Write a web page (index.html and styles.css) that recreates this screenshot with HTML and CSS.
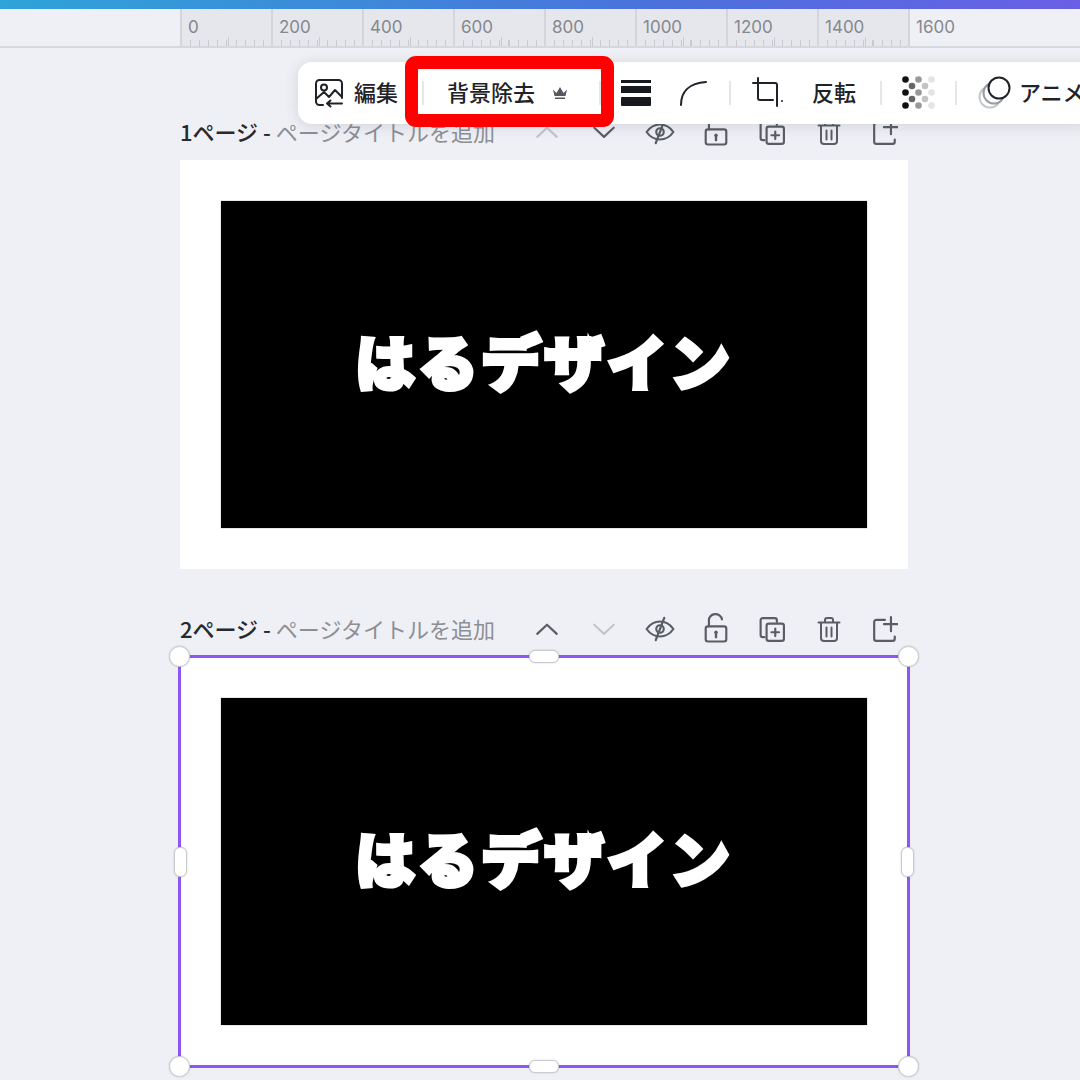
FILE: index.html
```html
<!DOCTYPE html>
<html lang="ja">
<head>
    <meta charset="utf-8">
    <title>はるデザイン</title>
    <link rel="stylesheet" href="styles.css">
</head>
<body>

<svg class="defs" width="0" height="0">
    <symbol id="i-up" viewBox="0 0 24 24"><path d="M3 16.500 12 8l9 8.500"/></symbol>
    <symbol id="i-down" viewBox="0 0 24 24"><path d="M3 8l9 8.500L21 8"/></symbol>
    <symbol id="i-eye" viewBox="0 0 28 24"><path d="M1.500 12C5 7 9 5 14 5s9 2 12.500 7C23 17 19 19 14 19S5 17 1.500 12z"/><circle cx="14" cy="12" r="3.500"/><path d="M18 1.500 10 22.500"/></symbol>
    <symbol id="i-lock" viewBox="0 0 24 28"><rect x="2.500" y="12" width="19" height="14" rx="2"/><path d="M5.500 12V7a6 5.500 0 0 1 12 -1.500"/><path d="M12 18v4" stroke-width="2.200"/><circle class="solid" cx="12" cy="17.500" r="1.600"/></symbol>
    <symbol id="i-copy" viewBox="0 0 24 24"><path d="M5 19.500H3.500A2 2 0 0 1 1.500 17.500V4A2 2 0 0 1 3.500 2h11A2 2 0 0 1 16.500 4v1.500"/><rect x="7" y="7" width="16" height="16" rx="2"/><path d="M15 11.500v7M11.500 15h7"/></symbol>
    <symbol id="i-trash" viewBox="0 0 24 26"><path d="M1.500 6.500h21M8 6V4a2 2 0 0 1 2 -2h4a2 2 0 0 1 2 2v2"/><path d="M4 7v15a3 3 0 0 0 3 3h10a3 3 0 0 0 3 -3V7"/><path d="M9.500 11.500v9M14.500 11.500v9"/></symbol>
    <symbol id="i-add" viewBox="0 0 24 24"><path d="M12 3.500H4A2 2 0 0 0 2 5.500V21a2 2 0 0 0 2 2h15a2 2 0 0 0 2 -2v-2"/><path d="M17.500 1v13M11 7.500h13"/></symbol>
</svg>

<div class="topbar"></div>

<div class="ruler">
    <div class="ruler-seg"><span>0</span></div>
    <div class="ruler-seg"><span>200</span></div>
    <div class="ruler-seg"><span>400</span></div>
    <div class="ruler-seg"><span>600</span></div>
    <div class="ruler-seg"><span>800</span></div>
    <div class="ruler-seg"><span>1000</span></div>
    <div class="ruler-seg"><span>1200</span></div>
    <div class="ruler-seg"><span>1400</span></div>
    <div class="ruler-end">1600</div>
</div>

<div class="toolbar">
    <div class="tool tool-edit">
        <svg class="tool-icon" width="30" height="30" viewBox="0 0 30 30">
            <path d="M13 2H5.500A3.500 3.500 0 0 0 2 5.500v18A3.500 3.500 0 0 0 5.500 27H9"/>
            <path d="M13 2h11.500A3.500 3.500 0 0 1 28 5.500V20"/>
            <circle cx="10" cy="9.500" r="3"/>
            <path d="M2 21 10 14l5 5 6-7 7 7"/>
            <path d="M13 25.500h15M16.500 22.500l-3.500 3 3.500 3"/>
        </svg>
        <span>編集</span>
    </div>
    <div class="divider div-a"></div>
    <div class="tool tool-bg">
        <span>背景除去</span>
        <svg width="16" height="14" viewBox="0 0 16 14"><path class="crown" d="M1 3.500 4.500 7 8 1l3.500 6L15 3.500 13.500 10h-11zM3 11.500h10V13H3z"/></svg>
    </div>
    <div class="divider div-b"></div>
    <svg class="tool-lines" width="30" height="26" viewBox="0 0 30 26">
        <rect y="0" width="30" height="3"/>
        <rect y="6" width="30" height="7"/>
        <rect y="17" width="30" height="9" rx="1"/>
    </svg>
    <svg class="tool-curve" width="28" height="26" viewBox="0 0 28 26"><path d="M2 25C2 12 10 3 27 2"/></svg>
    <div class="divider div-c"></div>
    <svg class="tool-crop" width="32" height="32" viewBox="0 0 32 32">
        <path d="M1 6h22a2 2 0 0 1 2 2v21"/>
        <path d="M6 1v20a2 2 0 0 0 2 2h13"/>
        <circle class="solid" cx="30" cy="24" r="1"/>
    </svg>
    <div class="tool tool-flip"><span>反転</span></div>
    <div class="divider div-d"></div>
    <svg class="tool-check" width="34" height="34" viewBox="0 0 34 34">
        <g fill="#111"><circle cx="3.500" cy="3.500" r="3.300"/><circle cx="3.500" cy="16.500" r="3.300"/><circle cx="3.500" cy="29.500" r="3.300"/></g>
        <g fill="#666"><circle cx="10" cy="10" r="3.300"/><circle cx="10" cy="23" r="3.300"/></g>
        <g fill="#999"><circle cx="16.500" cy="3.500" r="3.300"/><circle cx="16.500" cy="16.500" r="3.300"/><circle cx="16.500" cy="29.500" r="3.300"/></g>
        <g fill="#c4c4c4"><circle cx="23" cy="10" r="3.300"/><circle cx="23" cy="23" r="3.300"/></g>
        <g fill="#e4e4e4"><circle cx="29.500" cy="3.500" r="3.300"/><circle cx="29.500" cy="16.500" r="3.300"/><circle cx="29.500" cy="29.500" r="3.300"/></g>
    </svg>
    <div class="divider div-e"></div>
    <svg class="tool-anim" width="34" height="34" viewBox="0 0 34 34">
        <circle class="ring3" cx="12" cy="21" r="10.500"/>
        <circle class="ring2" cx="16" cy="17" r="10.500"/>
        <circle class="ring1" cx="21" cy="12" r="10.500"/>
    </svg>
    <div class="tool tool-anim-label"><span>アニメート</span></div>
    <div class="highlight"></div>
</div>

<main class="pages">
    <section class="page">
        <div class="page-head">
            <div class="page-title"><b>1ページ -</b> ページタイトルを追加</div>
            <div class="page-actions">
                <svg class="act off"><use href="#i-up"/></svg>
                <svg class="act"><use href="#i-down"/></svg>
                <svg class="act act-eye"><use href="#i-eye"/></svg>
                <svg class="act act-lock"><use href="#i-lock"/></svg>
                <svg class="act"><use href="#i-copy"/></svg>
                <svg class="act"><use href="#i-trash"/></svg>
                <svg class="act"><use href="#i-add"/></svg>
            </div>
        </div>
        <div class="card">
            <div class="artwork">はるデザイン</div>
        </div>
    </section>

    <section class="page">
        <div class="page-head">
            <div class="page-title"><b>2ページ -</b> ページタイトルを追加</div>
            <div class="page-actions">
                <svg class="act"><use href="#i-up"/></svg>
                <svg class="act off"><use href="#i-down"/></svg>
                <svg class="act act-eye"><use href="#i-eye"/></svg>
                <svg class="act act-lock"><use href="#i-lock"/></svg>
                <svg class="act"><use href="#i-copy"/></svg>
                <svg class="act"><use href="#i-trash"/></svg>
                <svg class="act"><use href="#i-add"/></svg>
            </div>
        </div>
        <div class="card selected">
            <div class="artwork">はるデザイン</div>
            <i class="handle corner tl"></i>
            <i class="handle corner tr"></i>
            <i class="handle corner bl"></i>
            <i class="handle corner br"></i>
            <i class="handle pill-h top"></i>
            <i class="handle pill-h bottom"></i>
            <i class="handle pill-v left"></i>
            <i class="handle pill-v right"></i>
        </div>
    </section>
</main>

</body>
</html>
```

FILE: styles.css
```css
* {
    box-sizing: border-box;
}

html, body {
    margin: 0;
    height: 1080px;
    overflow: hidden;
}

body {
    position: relative;
    background-color: #eff0f5;
    font-family: "Noto Sans CJK JP", "Noto Sans", sans-serif;
    color: #1f2328;
}

.defs {
    position: absolute;
}

.topbar {
    height: 9px;
    background: linear-gradient(90deg, #2fa4d8 0%, #4a72db 60%, #6a5fe6 100%);
}

.ruler {
    display: flex;
    height: 39px;
    padding-left: 180px;
    border-bottom: 2px solid #d6d8de;
    font-family: "Inter", "Open Sans", sans-serif;
    font-size: 17px;
    line-height: 22px;
    color: #85888e;
}

.ruler-seg {
    width: 91px;
    padding: 7px 0 0 6px;
    background-color: #e6e7ec;
    border-left: 2px solid #d3d5da;
    background-image:
        repeating-linear-gradient(90deg, #c9cbd1 0 1px, transparent 1px 9.100px);
    background-size: 82px 6px;
    background-position: 8px 100%;
    background-repeat: no-repeat;
    position: relative;
}

.ruler-seg::after {
    content: "";
    position: absolute;
    left: 46px;
    bottom: 0;
    width: 1px;
    height: 9px;
    background-color: #c9cbd1;
}

.ruler-end {
    padding: 7px 0 0 6px;
    border-left: 2px solid #d3d5da;
}

.toolbar {
    position: absolute;
    left: 298px;
    top: 62px;
    width: 800px;
    height: 62px;
    display: flex;
    align-items: center;
    background-color: #fff;
    border-radius: 14px;
    box-shadow: 0 2px 14px rgba(60, 66, 87, 0.16);
    font-size: 22px;
    font-weight: 500;
}

.toolbar svg {
    flex: none;
    fill: none;
    stroke: #1f2328;
    stroke-width: 2;
    stroke-linecap: round;
    stroke-linejoin: round;
}

.tool {
    display: flex;
    align-items: center;
    white-space: nowrap;
}

.tool span {
    margin-bottom: 4px;
}

.tool-edit {
    margin-left: 16px;
}

.tool-edit span {
    margin-left: 10px;
}

.tool-bg {
    margin-left: 23px;
}

.tool-bg svg {
    margin-left: 17px;
}

.toolbar .crown {
    fill: #55585e;
    stroke: none;
}

.divider {
    flex: none;
    width: 2px;
    height: 24px;
    background-color: #e4e6ea;
}

.div-a {
    margin-left: 24px;
}

.div-b {
    margin-left: 31px;
}

.toolbar .tool-lines {
    margin-left: 20px;
    stroke: none;
    fill: #16191d;
}

.tool-curve {
    margin-left: 28px;
}

.div-c {
    margin-left: 22px;
}

.tool-crop {
    margin-left: 21px;
}

.toolbar .solid {
    fill: #1f2328;
    stroke: none;
}

.tool-flip {
    margin-left: 28px;
}

.div-d {
    margin-left: 24px;
}

.toolbar .tool-check {
    margin-left: 20px;
    stroke: none;
}

.div-e {
    margin-left: 19px;
}

.tool-anim {
    margin-left: 21px;
}

.toolbar .ring1 {
    fill: #fff;
}

.toolbar .ring2 {
    fill: #fff;
    stroke: #9a9da2;
}

.toolbar .ring3 {
    stroke: #c6c8cc;
}

.tool-anim-label {
    margin-left: 7px;
}

.highlight {
    position: absolute;
    left: 107px;
    top: -6px;
    width: 209px;
    height: 71px;
    border: 13px solid #ff0000;
    border-radius: 11px;
}

.pages {
    padding-left: 180px;
    width: 908px;
}

.page {
    margin-bottom: 46px;
}

.page-head {
    display: flex;
    align-items: center;
    justify-content: space-between;
    width: 718px;
    height: 28px;
    margin: 70px 0 14px;
}

.page + .page .page-head {
    margin-top: 0;
}

.page-title {
    font-size: 22px;
    color: #8c8f94;
    white-space: nowrap;
    margin-bottom: 2px;
}

.page-title b {
    font-weight: 500;
    color: #26292e;
}

.page-actions {
    display: flex;
    align-items: center;
    justify-content: flex-end;
}

.act {
    width: 26px;
    height: 26px;
    margin-left: 30.300px;
    fill: none;
    stroke: #5a5d63;
    stroke-width: 2;
    stroke-linecap: round;
    stroke-linejoin: round;
}

.act.off {
    stroke: #c3c5cb;
}

.act-eye {
    width: 30px;
    margin: 0 -2px 0 28.300px;
}

.act-lock {
    height: 31px;
    margin-top: -2px;
}

.solid {
    fill: #5a5d63;
    stroke: none;
}

.card {
    position: relative;
    width: 728px;
    height: 409px;
    padding: 41px;
    background-color: #fff;
}

.artwork {
    display: flex;
    align-items: center;
    justify-content: center;
    height: 100%;
    padding-bottom: 10px;
    background-color: #000;
    box-shadow: 0 0 1px #777;
    color: #fff;
    font-size: 60px;
    font-weight: 900;
    letter-spacing: 3px;
    -webkit-text-stroke: 4px #fff;
    line-height: 1;
}

.selected {
    outline: 3px solid #8d56f7;
    outline-offset: -1px;
}

.handle {
    position: absolute;
    background-color: #fff;
    border: 1px solid #c9cbd0;
    box-shadow: 0 0 2px rgba(0, 0, 0, 0.2);
}

.corner {
    width: 21px;
    height: 21px;
    border-radius: 50%;
}

.tl { left: -11px; top: -11px; }
.tr { right: -11px; top: -11px; }
.bl { left: -11px; bottom: -11px; }
.br { right: -11px; bottom: -11px; }

.pill-h {
    left: 349px;
    width: 30px;
    height: 13px;
    border-radius: 6px;
}

.pill-v {
    top: 190px;
    width: 13px;
    height: 30px;
    border-radius: 6px;
}

.top { top: -7px; }
.bottom { bottom: -7px; }
.left { left: -6px; }
.right { right: -6px; }
```
